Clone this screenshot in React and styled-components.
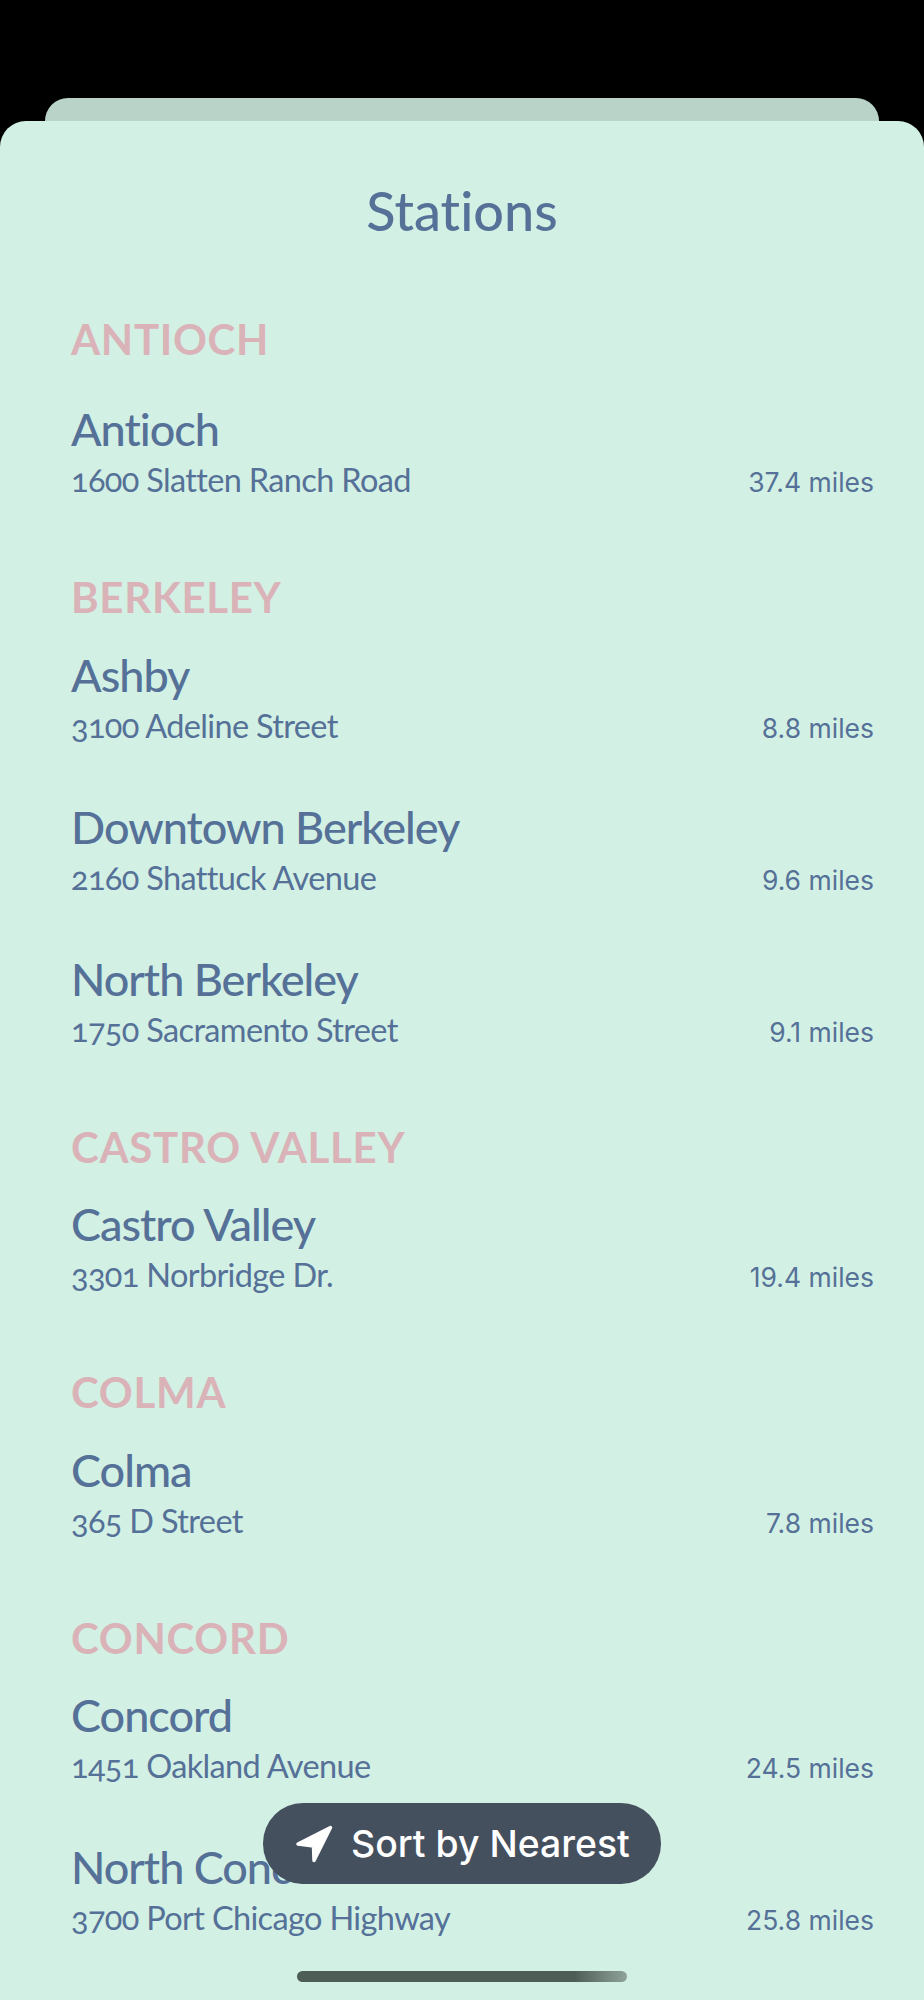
import React from 'react'
import styled, {createGlobalStyle} from 'styled-components'

const GlobalStyle = createGlobalStyle`
  html, body {
    margin: 0;
    padding: 0;
    background: #000;
  }
  * {
    box-sizing: border-box;
  }
`

const sections = [
    {
        title: 'ANTIOCH',
        stations: [{name: 'Antioch', address: '1600 Slatten Ranch Road', distance: '37.4 miles'}],
    },
    {
        title: 'BERKELEY',
        stations: [
            {name: 'Ashby', address: '3100 Adeline Street', distance: '8.8 miles'},
            {name: 'Downtown Berkeley', address: '2160 Shattuck Avenue', distance: '9.6 miles'},
            {name: 'North Berkeley', address: '1750 Sacramento Street', distance: '9.1 miles'},
        ],
    },
    {
        title: 'CASTRO VALLEY',
        stations: [{name: 'Castro Valley', address: '3301 Norbridge Dr.', distance: '19.4 miles'}],
    },
    {
        title: 'COLMA',
        stations: [{name: 'Colma', address: '365 D Street', distance: '7.8 miles'}],
    },
    {
        title: 'CONCORD',
        stations: [
            {name: 'Concord', address: '1451 Oakland Avenue', distance: '24.5 miles'},
            {name: 'North Concord', address: '3700 Port Chicago Highway', distance: '25.8 miles'},
        ],
    },
]

function App() {
    return (
        <Screen>
            <GlobalStyle/>
            <BackSheet/>
            <Sheet>
                <Title>Stations</Title>
                {sections.map((section) => (
                    <Section key={section.title}>
                        <SectionTitle>{section.title}</SectionTitle>
                        {section.stations.map((station) => (
                            <Row key={station.name}>
                                <div>
                                    <Name>{station.name}</Name>
                                    <Address>{station.address}</Address>
                                </div>
                                <Distance>{station.distance}</Distance>
                            </Row>
                        ))}
                    </Section>
                ))}
                <SortButton>
                    <svg width="38" height="38" viewBox="0 0 38 38">
                        <path
                            d="M35.5 2.5 L3 19 L18.5 21 L19 35.5 Z"
                            fill="#fff"
                            stroke="#fff"
                            strokeWidth="3.5"
                            strokeLinejoin="round"
                        />
                    </svg>
                    Sort by Nearest
                </SortButton>
                <HomeBar/>
            </Sheet>
        </Screen>
    )
}

const Screen = styled.div`
  width: 924px;
  height: 2000px;
  padding-top: 98px;
  background: #000;
  overflow: hidden;
`

const BackSheet = styled.div`
  height: 23px;
  margin: 0 45px;
  background: #b9d3c8;
  border-radius: 24px 24px 0 0;
`

const Sheet = styled.div`
  position: relative;
  height: 1879px;
  padding: 60px 50px 0 71px;
  background: #d3f0e4;
  border-radius: 26px 26px 0 0;
  overflow: hidden;
  font-family: "Lato", sans-serif;
  font-variant-ligatures: none;
  color: #557198;
`

const Title = styled.h1`
  margin: 0 0 76px -21px;
  height: 60px;
  font-size: 54px;
  line-height: 60px;
  font-weight: 500;
  text-align: center;
`

const Section = styled.section`
  margin-bottom: 32px;

  &:first-of-type > h2 {
    margin-bottom: 30px;
  }
`

const SectionTitle = styled.h2`
  margin: 0 0 17.5px;
  height: 44px;
  font-size: 42px;
  line-height: 44px;
  font-weight: 700;
  color: #d9b3b8;
  letter-spacing: 0.7px;
`

const Row = styled.div`
  display: flex;
  justify-content: space-between;
  align-items: flex-end;
  height: 152px;
  padding-bottom: 38px;
`

const Name = styled.div`
  font-size: 45px;
  line-height: 52px;
  font-weight: 500;
  letter-spacing: -1px;
`

const Address = styled.div`
  font-size: 32.5px;
  line-height: 50px;
  letter-spacing: -0.65px;
  font-variant-numeric: oldstyle-nums;
`

const Distance = styled.div`
  font-family: "Inter", sans-serif;
  font-size: 26.5px;
  line-height: 50px;
  transform: translateY(2px);
`

const SortButton = styled.div`
  position: absolute;
  top: 1682px;
  left: 50%;
  transform: translateX(-50%);
  display: flex;
  align-items: center;
  gap: 18px;
  width: 398px;
  height: 81px;
  padding-left: 32px;
  border-radius: 40px;
  background: #45505e;
  color: #fff;
  font-family: "Inter", sans-serif;
  font-size: 37.4px;
  font-weight: 500;
  white-space: nowrap;
`

const HomeBar = styled.div`
  position: absolute;
  bottom: 18px;
  left: 50%;
  transform: translateX(-50%);
  width: 330px;
  height: 11px;
  border-radius: 6px;
  background: linear-gradient(90deg, #4f5d57 0%, #4f5d57 84%, #8fa39a 100%);
`

export default App
